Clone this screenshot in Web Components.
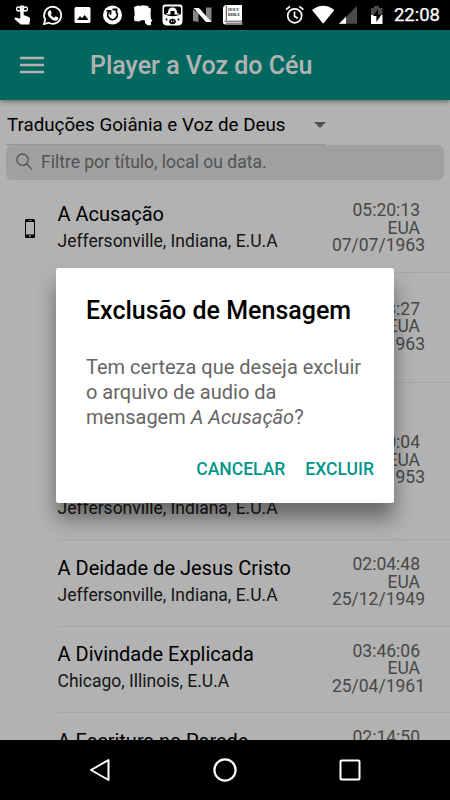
<!DOCTYPE html>
<html lang="pt-BR">
<head>
<meta charset="utf-8">
<title>Player a Voz do Céu</title>
<style>
    body {
        margin: 0;
        width: 450px;
        height: 800px;
        overflow: hidden;
        background: #000;
        font-family: Roboto, "Liberation Sans", sans-serif;
    }
</style>
</head>
<body>
<player-app>
    <status-bar slot="status" time="22:08"></status-bar>
    <app-header slot="header">Player a Voz do Céu</app-header>
    <source-select>Traduções Goiânia e Voz de Deus</source-select>
    <search-field>Filtre por título, local ou data.</search-field>
    <message-item local time="05:20:13" country="EUA" date="07/07/1963">
        <span slot="title">A Acusação</span>
        <span slot="place">Jeffersonville, Indiana, E.U.A</span>
    </message-item>
    <message-item style="--h: 110px" time="3:27" country="EUA" date="1963"></message-item>
    <message-item style="--h: 157.4px" time="0:04" country="EUA" date="1953">
        <span slot="place">Jeffersonville, Indiana, E.U.A</span>
    </message-item>
    <message-item time="02:04:48" country="EUA" date="25/12/1949">
        <span slot="title">A Deidade de Jesus Cristo</span>
        <span slot="place">Jeffersonville, Indiana, E.U.A</span>
    </message-item>
    <message-item time="03:46:06" country="EUA" date="25/04/1961">
        <span slot="title">A Divindade Explicada</span>
        <span slot="place">Chicago, Illinois, E.U.A</span>
    </message-item>
    <message-item time="02:14:50">
        <span slot="title">A Escritura na Parede</span>
    </message-item>
    <confirm-dialog slot="overlay" heading="Exclusão de Mensagem" cancel="CANCELAR" confirm="EXCLUIR">Tem certeza que deseja excluir o arquivo de audio da mensagem <i>A Acusação</i>?</confirm-dialog>
    <nav-bar slot="nav"></nav-bar>
</player-app>

<script>
class BaseElement extends HTMLElement {

    constructor() {
        super();
        this.root = this.attachShadow({ mode: 'open' });
    }

    attr(name) {
        return this.getAttribute(name) || '';
    }

    connectedCallback() {
        this.root.innerHTML = this.render();
    }
}

class PlayerApp extends BaseElement {
    render() {
        return `
            <style>
                :host { display: flex; flex-direction: column; width: 450px; height: 800px; }
                #view { position: relative; flex: 1; min-height: 0; display: flex; flex-direction: column; overflow: hidden; background: #fff; }
                #list { flex: 1; min-height: 0; overflow: hidden; }
            </style>
            <slot name="status"></slot>
            <div id="view">
                <slot name="header"></slot>
                <div id="list"><slot></slot></div>
                <slot name="overlay"></slot>
            </div>
            <slot name="nav"></slot>
        `;
    }
}

class StatusBar extends BaseElement {
    render() {
        return `
            <style>
                :host { display: block; flex: none; height: 30px; background: #000; color: #fff; }
                #bar { display: flex; align-items: center; height: 30px; padding: 0 10px 0 12px; }
                svg { display: block; flex: none; }
                #system { margin-left: 41px; }
                #time { margin-left: auto; font-size: 18.5px; line-height: 30px; -webkit-text-stroke: .25px #fff; }
            </style>
            <div id="bar">
                <svg width="232" height="30" viewBox="12 0 232 30" fill="#fff">
                    <!-- touch -->
                    <g fill="none" stroke="#fff" stroke-width="1.3">
                        <circle cx="18.6" cy="9" r="2"/><circle cx="25.4" cy="9" r="2"/><circle cx="22" cy="7.8" r="1.8"/>
                    </g>
                    <path d="M20.3 8q1.7-2 3.4 0v7l5.6 2.2q1 .6.8 1.8l-.8 5.6h-8.5l-6.6-5.8 1.3-1.3 4.8 1.3z"/>
                    <!-- whatsapp -->
                    <path d="M44 24l1.2-4.6a8.5 8.5 0 1 1 3.5 3.4z" fill="none" stroke="#fff" stroke-width="1.8"/>
                    <path d="M49.2 10.2h1.3l1.3 2.8-1.1 1.4q1.2 2.3 3.6 3.3l1.3-1.4 2.8 1.4q0 2.8-2.8 3-3.4 0-6.3-3.4-3.2-3.8-.1-7.1z"/>
                    <!-- picture -->
                    <path fill-rule="evenodd" d="M76 7h13q1.5 0 1.5 1.5v13q0 1.5-1.5 1.5h-13q-1.5 0-1.5-1.5v-13q0-1.5 1.5-1.5zM77 20h11.500l-3.800-5-2.700 3.300-2-2.300z"/>
                    <!-- refresh badge -->
                    <circle cx="112.500" cy="15" r="9.500"/>
                    <path d="M109 11.500a4.800 4.800 0 1 0 7 0M112.500 9.500h4v4M106.500 10.800h4v4" fill="none" stroke="#000" stroke-width="1.800"/>
                    <!-- paper -->
                    <path d="M134 7l4-1.500 2 .5 3-.7 5 .7 1 2 2 .5-.5 5.500.5 5 1.500 1.500-1.500 1.500v3l-3 .5-3-2.500v-2.500l-3-.5-3 1.500-4.500-.5-.5-3 .7-4z"/>
                    <!-- robot -->
                    <path d="M165 4.500h15q2.500 0 2.500 2.500v14q0 4-4 4.500h-12q-4-.5-4-4.500V7q0-2.500 2.500-2.500z"/>
                    <path d="M165.500 6.500h14q1.500 0 1.500 1.500v6q-8.500 4.500-17 0V8q0-1.500 1.500-1.500z" fill="#000"/>
                    <path d="M166.500 14.500v-1.500h1.500q0-5.500 4.500-5.500t4.500 5.500h1.500v1.500h-4v-3.500h-4v3.500z"/>
                    <ellipse cx="172.500" cy="21.500" rx="3.300" ry="2.800" fill="#000"/>
                    <circle cx="166.500" cy="19.500" r="1" fill="#000"/><circle cx="178.500" cy="19.500" r="1" fill="#000"/>
                    <path d="M171 20.500h.9v1.500H171zM173.300 20.500h.9v1.500h-.9z"/>
                    <!-- N -->
                    <path d="M193 9.500l5.500 4v8.500l-5.500-1zM206 7.500h5.500v14.500l-5.500-4z" fill="#858585"/>
                    <path d="M193.500 8h5.500l12.500 14h-5.500z"/>
                    <!-- book -->
                    <path d="M227 5h15v17.500l.5 2h-17q-2.500 0-2.500-2.500V8.500q0-3.500 4-3.500z"/>
                    <path d="M226.300 6v14.500M224.500 21.200h17.500M226 23.200h16" stroke="#000" stroke-width=".7"/>
                    <g fill="#222" font-family="Liberation Serif, serif" font-size="4.500" font-weight="bold">
                        <text x="228" y="11" textLength="11" lengthAdjust="spacingAndGlyphs">HOLY</text>
                        <text x="228" y="15.500" textLength="12" lengthAdjust="spacingAndGlyphs">BIBLE</text>
                    </g>
                </svg>
                <svg id="system" width="105" height="30" viewBox="285 0 105 30">
                    <!-- alarm -->
                    <g fill="none" stroke="#fff" stroke-width="1.700">
                        <circle cx="294.700" cy="15.800" r="7"/><path d="M294.500 11.500v4.700l3.200 2M286 9.700l4-3.300M303.400 9.700l-4-3.300"/>
                    </g>
                    <!-- wifi -->
                    <path fill="#fff" d="M312 10q11.200-8.500 22.400 0L323.200 23.800z"/>
                    <!-- signal -->
                    <path fill="#4b4b4b" d="M339 23.800L357 6v17.800z"/><path fill="#fff" d="M339 23.800l7-7v7z"/>
                    <!-- battery -->
                    <path fill="#4b4b4b" d="M371 8h3V6h5v2h3.500v7H371z"/><path fill="#fff" d="M371 15h11.500v9H371z"/>
                    <path d="M378 9l-5 7h3.400v6l5.200-7.500h-3.600z"/>
                </svg>
                <span id="time">${this.attr('time')}</span>
            </div>
        `;
    }
}

class AppHeader extends BaseElement {
    render() {
        return `
            <style>
                :host { display: flex; align-items: center; flex: none; box-sizing: border-box; height: 70px; padding-left: 20px; gap: 46px;
                    background: #009688; color: #fff; font-size: 25px; font-weight: 500; box-shadow: 0 1px 5px rgba(0, 0, 0, .5); z-index: 1; }
            </style>
            <svg width="24" height="18" viewBox="0 0 24 18"><path d="M0 2h24M0 9h24M0 16h24" stroke="#fff" stroke-width="2.400"/></svg>
            <span><slot></slot></span>
        `;
    }
}

class SourceSelect extends BaseElement {
    render() {
        return `
            <style>
                :host { display: flex; justify-content: space-between; align-items: center; box-sizing: border-box; width: 320px; height: 45px; margin-left: 6px; padding: 5px 0 0 1px;
                    border-bottom: 1px solid #d8d8d8; font-size: 18.75px; white-space: nowrap; }
            </style>
            <span><slot></slot></span>
            <svg width="12" height="6" viewBox="0 0 12 6"><path d="M0 0h12L6 6z" fill="#757575"/></svg>
        `;
    }
}

class SearchField extends BaseElement {
    render() {
        return `
            <style>
                :host { display: flex; align-items: center; gap: 9px; box-sizing: border-box; height: 35px; margin: 0 6px 6.4px; padding: 0 0 2px 10px;
                    border-radius: 6px; background: #e5e5e5; color: #777; font-size: 17.5px; }
            </style>
            <svg width="16" height="17" viewBox="0 0 16 17" fill="none" stroke="#777" stroke-width="1.300"><circle cx="6.500" cy="6.700" r="5.700"/><path d="M10.600 10.800L16 16.400"/></svg>
            <span><slot></slot></span>
        `;
    }
}

class MessageItem extends BaseElement {
    render() {
        const phone = '<svg width="10" height="19" viewBox="0 0 10 19"><path fill-rule="evenodd" d="M1.500 0h7Q10 0 10 1.500v16q0 1.500-1.500 1.500h-7Q0 19 0 17.500v-16Q0 0 1.500 0zM1 3v12.500h8V3zM3.500 1.200v.7h3v-.7zM4 16.500v1.200h2v-1.200z"/></svg>';
        return `
            <style>
                :host { display: flex; height: var(--h, 86.4px); }
                #icon { display: flex; align-items: center; box-sizing: border-box; width: 57.5px; padding: 0 0 3px 25px; }
                #body { flex: 1; display: flex; justify-content: space-between; box-sizing: border-box; border-bottom: 1px solid #f0f0f0; }
                #text { display: flex; flex-direction: column; justify-content: flex-end; padding-bottom: 18.8px; white-space: nowrap; }
                #title { font-size: 20px; line-height: 28px; margin-bottom: 1px; }
                #place { font-size: 17.5px; line-height: 24px; min-height: 24px; color: #222; }
                #meta { display: flex; flex-direction: column; justify-content: center; align-items: flex-end; padding: 0 30px 1px 0; color: #686868; font-size: 17.5px; line-height: 17.5px; }
                #meta div { min-height: 17.5px; }
                #date { margin-right: -5px; }
            </style>
            <div id="icon">${this.hasAttribute('local') ? phone : ''}</div>
            <div id="body">
                <div id="text">
                    <div id="title"><slot name="title"></slot></div>
                    <div id="place"><slot name="place"></slot></div>
                </div>
                <div id="meta">
                    <div>${this.attr('time')}</div>
                    <div>${this.attr('country')}</div>
                    <div id="date">${this.attr('date')}</div>
                </div>
            </div>
        `;
    }
}

class ConfirmDialog extends BaseElement {
    render() {
        return `
            <style>
                :host { position: absolute; inset: 0; z-index: 2; display: flex; align-items: center; justify-content: center; background: rgba(0, 0, 0, .3); }
                #box { box-sizing: border-box; width: 338px; height: 235px; padding: 28px 20px 15px 30px; border-radius: 2.5px; background: #fff; display: flex; flex-direction: column;
                    box-shadow: 0 16px 20px rgba(0, 0, 0, .4); }
                h2 { margin: 0; font-size: 25px; font-weight: 500; line-height: 30px; white-space: nowrap; }
                p { margin: 29px 0 0; width: 280px; font-size: 20px; line-height: 25px; color: #666; }
                #buttons { display: flex; justify-content: flex-end; gap: 20px; margin-top: auto; }
                button { border: 0; padding: 0; background: none; color: #009688; font: 500 17.5px/38px Roboto, sans-serif; }
            </style>
            <div id="box">
                <h2>${this.attr('heading')}</h2>
                <p><slot></slot></p>
                <div id="buttons"><button>${this.attr('cancel')}</button><button>${this.attr('confirm')}</button></div>
            </div>
        `;
    }
}

class NavBar extends BaseElement {
    render() {
        return `
            <style>
                :host { display: flex; flex: none; align-items: center; justify-content: space-between; box-sizing: border-box; height: 60px; padding: 0 88px; background: #000; }
            </style>
            <svg width="24" height="26" viewBox="0 0 24 26"><path d="M3 13L20.500 3v20z" fill="none" stroke="#fff" stroke-width="2" stroke-linejoin="round"/></svg>
            <svg width="26" height="26" viewBox="0 0 26 26"><circle cx="13" cy="13" r="10.600" fill="none" stroke="#fff" stroke-width="2.200"/></svg>
            <svg width="24" height="26" viewBox="0 0 24 26"><rect x="2.500" y="3.500" width="19" height="19" rx="1" fill="none" stroke="#fff" stroke-width="2"/></svg>
        `;
    }
}

customElements.define('player-app', PlayerApp);
customElements.define('status-bar', StatusBar);
customElements.define('app-header', AppHeader);
customElements.define('source-select', SourceSelect);
customElements.define('search-field', SearchField);
customElements.define('message-item', MessageItem);
customElements.define('confirm-dialog', ConfirmDialog);
customElements.define('nav-bar', NavBar);
</script>
</body>
</html>
